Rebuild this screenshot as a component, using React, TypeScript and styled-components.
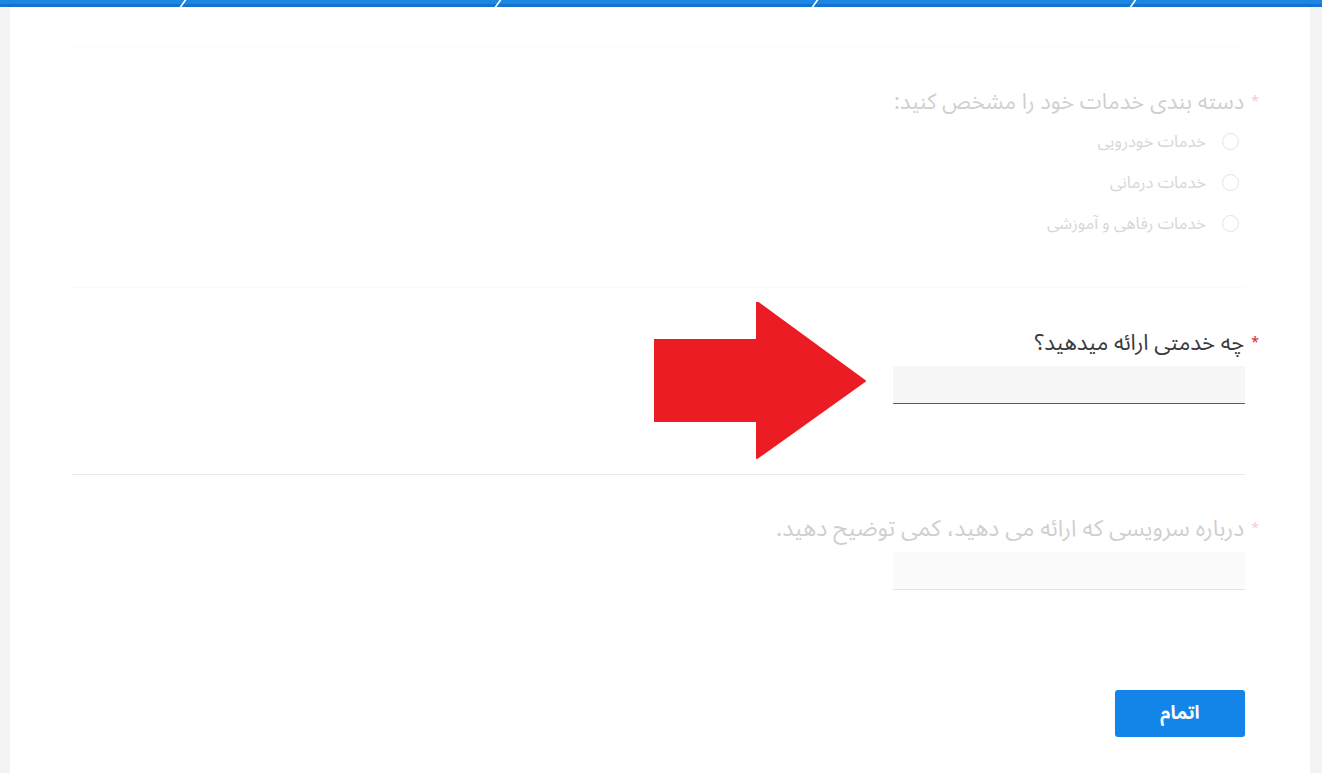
import React from "react";
import styled, { createGlobalStyle } from "styled-components";

const GlobalStyle = createGlobalStyle`
  html, body {
    margin: 0;
    padding: 0;
    background: #f4f4f4;
  }
  body {
    font-family: "Noto Sans Arabic", "DejaVu Sans", "Noto Sans", sans-serif;
  }
`;

const Page = styled.div`
  min-height: 773px;
  display: flex;
  flex-direction: column;
`;

const TopBar = styled.div`
  height: 7px;
  background: linear-gradient(#1b86e3 0 4px, #1473d0 4px 7px);
  display: grid;
  grid-template-columns: 183px 315px 317px 318px 1fr;
`;

const BarStep = styled.div`
  position: relative;
  & + &::before {
    content: "";
    position: absolute;
    left: -1px;
    top: 0;
    width: 2px;
    height: 7px;
    background: #ffffff;
    transform: skewX(-35deg);
  }
`;

const Card = styled.div`
  margin: 0 12px 0 10px;
  background: #ffffff;
  padding: 0 65px 35px 62px;
  direction: rtl;
  position: relative;
  flex: 1;
`;

const Section = styled.div<{ $faded?: boolean; $top: number; $bottom: number; $last?: boolean }>`
  padding: ${(p) => p.$top}px 0 ${(p) => p.$bottom}px;
  border-bottom: ${(p) => (p.$last ? "none" : "1px solid #e9e9e9")};
  opacity: ${(p) => (p.$faded ? 0.24 : 1)};
`;

const Label = styled.div<{ $size?: number }>`
  font-size: ${(p) => p.$size ?? 22}px;
  line-height: 24px;
  color: #3a3a3a;
  margin: 0 -14px 11px 0;
  display: flex;
  align-items: center;
  gap: 7px;
`;

const Star = styled.span`
  color: #d8232a;
  font-size: 14px;
`;

const Options = styled.div`
  display: flex;
  flex-direction: column;
  margin-top: -4px;
  padding-right: 6px;
`;

const Option = styled.label`
  display: flex;
  align-items: center;
  gap: 16px;
  height: 41px;
  font-size: 16.5px;
  color: #555;
`;

const Radio = styled.span`
  width: 15px;
  height: 15px;
  border-radius: 50%;
  border: 1.5px solid #8c8c8c;
`;

const Field = styled.div<{ $dim?: boolean }>`
  width: 352px;
  height: 37px;
  background: ${(p) => (p.$dim ? "#f2f2f2" : "#f7f7f7")};
  border-bottom: 1px solid ${(p) => (p.$dim ? "#8a8a8a" : "#565b66")};
`;

const Footer = styled.div`
  padding-top: 100px;
  display: flex;
`;

const Button = styled.button`
  width: 130px;
  height: 47px;
  border: none;
  border-radius: 3px;
  background: #1485e8;
  color: #ffffff;
  font-family: inherit;
  font-size: 18.5px;
  font-weight: bold;
  cursor: pointer;
`;

const Arrow = styled.svg`
  position: absolute;
  left: 644px;
  top: 295px;
`;

const options = ["خدمات خودرویی", "خدمات درمانی", "خدمات رفاهی و آموزشی"];

export default function App() {
  return (
    <Page>
      <GlobalStyle />
      <TopBar>
        <BarStep />
        <BarStep />
        <BarStep />
        <BarStep />
        <BarStep />
      </TopBar>
      <Card>
        <Section $faded $top={39} $bottom={0} />
        <Section $faded $top={43} $bottom={43}>
          <Label>
            <Star>*</Star>دسته بندی خدمات خود را مشخص کنید:
          </Label>
          <Options>
            {options.map((o) => (
              <Option key={o}>
                <Radio />
                {o}
              </Option>
            ))}
          </Options>
        </Section>
        <Section $top={43} $bottom={70}>
          <Label>
            <Star>*</Star>چه خدمتی ارائه میدهید؟
          </Label>
          <Field />
        </Section>
        <Section $faded $last $top={42} $bottom={0}>
          <Label $size={23}>
            <Star>*</Star>درباره سرویسی که ارائه می دهید، کمی توضیح دهید.
          </Label>
          <Field $dim />
        </Section>
        <Footer>
          <Button>اتمام</Button>
        </Footer>
        <Arrow width="212" height="157" viewBox="0 0 212 157">
          <polygon
            points="0,38 103,38 103,0 211,79 103,156 103,119 0,119"
            fill="#ec1c24"
            stroke="#ec1c24"
            strokeWidth="2"
            strokeLinejoin="round"
          />
        </Arrow>
      </Card>
    </Page>
  );
}
